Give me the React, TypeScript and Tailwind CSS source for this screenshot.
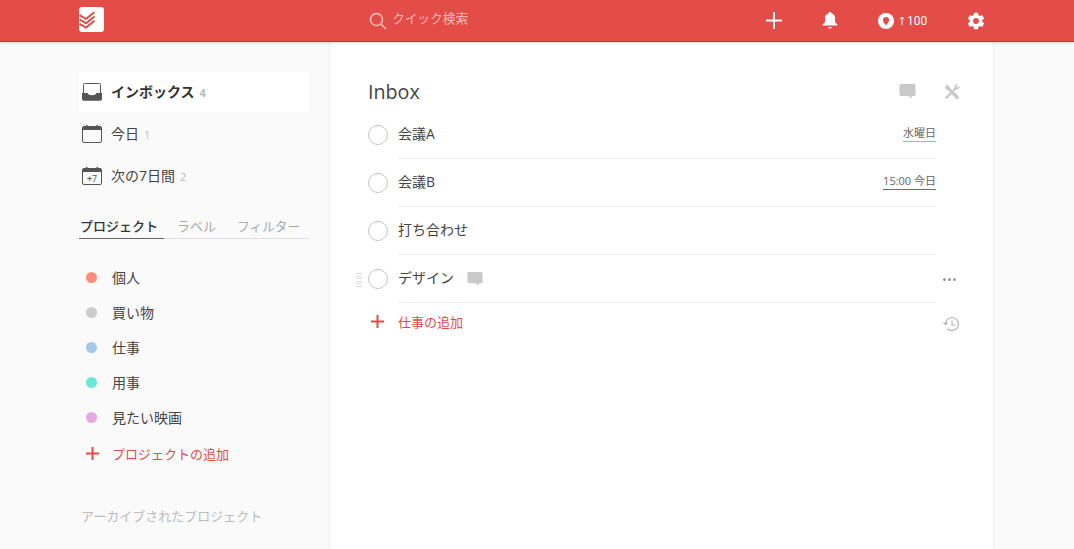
import React from "react";

const F = "font-['Open_Sans','Noto_Sans_CJK_JP',sans-serif]";

function Logo() {
  return (
    <svg width="25" height="25" viewBox="0 0 25 25">
      <rect width="25" height="25" rx="3" fill="#fff" />
      <g fill="none" stroke="#e44c47" strokeWidth="2">
        <path d="M0.5 8.2 L7 11.8 L15.5 5.2" />
        <path d="M0.5 12.5 L7 16.2 L15.5 9.5" />
        <path d="M0.5 16.8 L7 20.5 L15.5 13.8" />
      </g>
    </svg>
  );
}

function InboxIcon() {
  return (
    <svg width="20" height="18" viewBox="0 0 20 18" fill="none">
      <path d="M1.500 10V1.600C1.500 1 2 .5 2.600 .5h14.800c.6 0 1.100.5 1.100 1.100V10" stroke="#555" strokeWidth="1" />
      <path d="M0 10h5.600c.5 1.500 2 2.200 4.400 2.200s3.900-.7 4.400-2.200H20v5.500c0 1.500-.9 2.300-2.200 2.300H2.200C.9 17.800 0 17 0 15.500z" fill="#555" />
    </svg>
  );
}

function CalIcon({ plus }: { plus?: boolean }) {
  return (
    <svg width="20" height="18" viewBox="0 0 20 18" fill="none">
      <rect x=".5" y="1.500" width="19" height="16" rx="1.500" stroke="#555" />
      <path d="M.5 3C.5 2 1.300 1.500 2 1.500h16c.7 0 1.500.5 1.500 1.500v2H.5z" fill="#555" />
      <rect x="4" y="0" width="1.500" height="3" fill="#555" />
      <rect x="14.500" y="0" width="1.500" height="3" fill="#555" />
      {plus && (
        <text x="10" y="14.800" textAnchor="middle" fontSize="9" fill="#555" fontFamily="Roboto, sans-serif">
          +7
        </text>
      )}
    </svg>
  );
}

function Comment({ w = 16 }: { w?: number }) {
  return (
    <svg width={w} height={w} viewBox="0 0 16 16">
      <path d="M2 1h12c1 0 1.600.6 1.600 1.600v8c0 1-.6 1.600-1.600 1.600h-2.200v2.600L9 12.200H2c-1 0-1.600-.6-1.600-1.600v-8C.4 1.600 1 1 2 1z" fill="#c9c9c9" />
    </svg>
  );
}

function Tools() {
  return (
    <svg width="16" height="16" viewBox="0 0 16 16" fill="#c9c9c9">
      <path d="M1 13.600 L6.600 7.800 L8.400 9.500 L2.600 15.200 Z" />
      <path d="M8.600 5.800 L10.800 3.400 L10.400 2 L12.600 0 L14 .4 L12.600 2.200 L13.800 3.400 L15.400 2 L15.800 3.400 L13.800 5.600 L12.300 5.200 L10 7.400 Z" />
      <path d="M1 3 L3.200 .8 L5.400 2.400 L6 4 L14.800 12.200 L15 14 L13.600 15.200 L12 15 L4 6 L2.400 5.400 Z" />
    </svg>
  );
}

function Plus({ size = 13 }: { size?: number }) {
  return (
    <svg width={size} height={size} viewBox="0 0 13 13">
      <path d="M6.500 0v13M0 6.500h13" stroke="#e44c47" strokeWidth="2" />
    </svg>
  );
}

function NavItem({ icon, label, count, active }: { icon: React.ReactNode; label: string; count: number; active?: boolean }) {
  return (
    <div className={`flex items-center h-10 rounded-[3px] mb-[2px] ${active ? "bg-white" : ""}`}>
      <div className="w-[32px] pl-[3px] flex justify-start">{icon}</div>
      <span className={`text-[14px] leading-[20px] ${active ? "font-bold text-[#333]" : "text-[#444]"}`}>{label}</span>
      <span className={`text-[11px] leading-[16px] text-[#bbb] ml-[5px] mt-[2px] ${active ? "font-bold" : ""}`}>{count}</span>
    </div>
  );
}

function Project({ color, label }: { color: string; label: string }) {
  return (
    <div className="flex items-center h-[35px]">
      <span className="w-[11px] h-[11px] rounded-full ml-[7px] mr-[15px]" style={{ backgroundColor: color }} />
      <span className="text-[14px] leading-[20px] text-[#444] mt-[1px]">{label}</span>
    </div>
  );
}

function Task({ label, date, dateColor, comment, hover }: { label: string; date?: string; dateColor?: string; comment?: boolean; hover?: boolean }) {
  return (
    <div className="flex h-12 relative">
      {hover && (
        <div className="absolute left-[-12px] top-[18px] w-[6px] h-[14px] flex flex-col justify-between">
          {[0, 1, 2, 3, 4, 5].map((i) => (
            <div key={i} className="h-px bg-[#ddd]" />
          ))}
        </div>
      )}
      <div className="w-[20px] h-[20px] mt-[14px] rounded-full border border-[#c4c4c4] shrink-0" />
      <div className="ml-[10px] w-[538px] flex border-b border-[#eee] items-start pt-[13px]">
        <span className="text-[14px] leading-[20px] text-[#444]">{label}</span>
        {comment && (
          <span className="ml-[13px] mt-[3px]">
            <Comment />
          </span>
        )}
        {date && (
          <span className="ml-auto text-[11px] leading-[14px] text-[#666] border-b pb-[1px] mt-[2px]" style={{ borderColor: dateColor }}>
            {date}
          </span>
        )}
      </div>
      {hover && (
        <div className="absolute left-[575px] top-[23px] flex gap-[2px]">
          <span className="w-[3px] h-[3px] rounded-full bg-[#999]" />
          <span className="w-[3px] h-[3px] rounded-full bg-[#999]" />
          <span className="w-[3px] h-[3px] rounded-full bg-[#999]" />
        </div>
      )}
    </div>
  );
}

export default function App() {
  return (
    <div className={`h-[549px] w-[1074px] overflow-hidden flex flex-col bg-[#fafafa] ${F}`}>
      <header className="h-[42px] shrink-0 bg-[#e44c47] border-b border-[#c8312c] shadow-[0_1px_3px_rgba(0,0,0,0.15)] flex items-center relative z-10">
        <div className="ml-[79px] mb-[4px] mt-[1px]">
          <Logo />
        </div>
        <div className="ml-[265px] w-[397px] flex items-center">
          <svg width="18" height="18" viewBox="0 0 18 18" fill="none" stroke="#f7c3c1" strokeWidth="1.500">
            <circle cx="7.500" cy="7.500" r="6" />
            <path d="M12 12l5 5" />
          </svg>
          <span className="ml-[5px] text-[12.700px] leading-[20px] text-[#f7bdbb] mb-[5px]">クイック検索</span>
        </div>
        <div className="flex items-center">
          <svg width="16" height="17" viewBox="0 0 16 17">
            <path d="M8 0v17M0 8.500h16" stroke="#fff" strokeWidth="2" />
          </svg>
          <svg className="ml-[40px]" width="16" height="17" viewBox="0 0 16 17" fill="#fff">
            <path d="M8 0c.8 0 1.300.5 1.400 1.200C11.700 1.800 13 3.600 13 6v3.500c0 1 1 1.800 2.200 2.800.5.500.4 1.200-.4 1.200H1.200c-.8 0-.9-.7-.4-1.200C2 11.300 3 10.500 3 9.500V6c0-2.400 1.300-4.200 3.600-4.800C6.700.5 7.200 0 8 0z" />
            <path d="M6 15h4c-.2 1-1 1.500-2 1.500S6.200 16 6 15z" />
          </svg>
          <svg className="ml-[40px]" width="16" height="16" viewBox="0 0 16 16">
            <circle cx="8" cy="8" r="8" fill="#fff" />
            <path d="M8 12.500C6.500 10.500 5 9 5 7a3 3 0 0 1 6 0c0 2-1.500 3.500-3 5.500z" fill="#e44c47" />
          </svg>
          <svg className="ml-[5px]" width="6" height="9" viewBox="0 0 6 9" fill="none" stroke="#fff" strokeWidth="1">
            <path d="M3 9V1M.8 3.200L3 1l2.200 2.200" />
          </svg>
          <span className="ml-[2px] w-[21px] text-[12px] leading-[18px] text-white font-['Roboto',sans-serif]">100</span>
          <svg className="ml-[38px]" width="20" height="20" viewBox="0 0 24 24" fill="#fff">
            <path d="M19.400 13c.04-.3.06-.65.06-1s-.02-.7-.07-1l2.100-1.650c.2-.15.240-.42.120-.64l-2-3.460c-.12-.22-.39-.3-.61-.22l-2.490 1c-.52-.4-1.080-.73-1.690-.98l-.38-2.650A.49.49 0 0 0 14 2h-4c-.25 0-.46.180-.49.420l-.38 2.650c-.61.250-1.170.59-1.690.98l-2.490-1a.5.5 0 0 0-.61.220l-2 3.460c-.13.220-.07.490.12.640L4.570 11c-.04.300-.07.650-.07 1s.02.700.07 1l-2.110 1.650c-.19.150-.24.420-.12.640l2 3.460c.12.220.39.300.61.220l2.490-1c.52.400 1.080.730 1.690.980l.38 2.650c.03.240.24.420.49.420h4c.25 0 .46-.18.49-.42l.38-2.650c.61-.25 1.170-.59 1.690-.98l2.490 1c.23.080.490 0 .61-.22l2-3.460c.12-.22.070-.49-.12-.64zM12 15.500a3.500 3.500 0 1 1 0-7 3.500 3.500 0 0 1 0 7z" />
          </svg>
        </div>
      </header>

      <div className="flex flex-1 min-h-0">
        <aside className="w-[330px] shrink-0 border-r border-[#eee] bg-[#fafafa] pl-[79px] pr-[20px] pt-[30px]">
          <NavItem active icon={<InboxIcon />} label="インボックス" count={4} />
          <NavItem icon={<CalIcon />} label="今日" count={1} />
          <NavItem icon={<CalIcon plus />} label="次の7日間" count={2} />

          <div className="mt-[18px] flex h-[25px] border-b border-[#ddd] text-[13px] leading-[20px] text-[#aaa] pt-[2px]">
            <span className="w-[85px] pl-[1px] h-[23px] border-b border-[#666] font-medium text-[#333]">プロジェクト</span>
            <span className="ml-[13px]">ラベル</span>
            <span className="ml-[21px] text-[12.700px]">フィルター</span>
          </div>

          <div className="mt-[21px]">
            <Project color="#ff8d7c" label="個人" />
            <Project color="#cccccc" label="買い物" />
            <Project color="#a3c9e6" label="仕事" />
            <Project color="#6ae8d6" label="用事" />
            <Project color="#e6a8e0" label="見たい映画" />
            <div className="flex items-center h-[35px] mt-[1px]">
              <span className="ml-[7px] mr-[13px]">
                <Plus />
              </span>
              <span className="text-[13px] leading-[20px] text-[#e44c47]">プロジェクトの追加</span>
            </div>
          </div>
          <div className="mt-[35px] text-[13px] leading-[20px] text-[#bbb] ml-[2px]">アーカイブされたプロジェクト</div>
        </aside>

        <main className="w-[664px] shrink-0 bg-white border-r border-[#eee] pl-[38px] pt-[36px] relative">
          <div className="flex items-center h-7">
            <h1 className="w-[52px] text-[19.700px] leading-[28px] text-[#444] font-normal">Inbox</h1>
            <span className="ml-[479px] mb-[2px]">
              <Comment w={17} />
            </span>
            <span className="ml-[28px]">
              <Tools />
            </span>
          </div>
          <div className="mt-[5px]">
            <Task label="会議A" date="水曜日" dateColor="#f5a623" />
            <Task label="会議B" date="15:00 今日" dateColor="#00a65a" />
            <Task label="打ち合わせ" />
            <Task label="デザイン" comment hover />
            <div className="flex items-center h-[40px]">
              <span className="ml-[3px] mb-[4px]">
                <Plus />
              </span>
              <span className="ml-[14px] w-[65px] text-[13px] leading-[20px] text-[#e44c47] mb-[2px]">仕事の追加</span>
              <svg className="ml-[480px] mt-[2px]" width="17" height="16" viewBox="0 0 17 16" fill="none" stroke="#b5b5b5" strokeWidth="1.200">
                <path d="M2.500 8a6.500 6.500 0 1 1 2 4.700" />
                <path d="M.5 6.500l2 2.200 2.200-2.200" />
                <path d="M9 4.500V9h3.500" />
              </svg>
            </div>
          </div>
        </main>
      </div>
    </div>
  );
}
